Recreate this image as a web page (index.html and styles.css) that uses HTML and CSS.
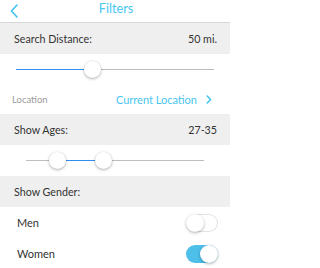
FILE: index.html
```html
<!DOCTYPE html>
<html>
<head>
<meta charset="utf-8">
<link rel="stylesheet" href="styles.css">
</head>
<body>
<div class="screen">
  <header class="topbar">
    <svg class="back" width="8" height="14" viewBox="0 0 8 14"><path d="M7 1 L1.5 7 L7 13" fill="none" stroke="#3fc3ee" stroke-width="1.6" stroke-linecap="round" stroke-linejoin="round"/></svg>
    <div class="title">Filters</div>
  </header>
  <div class="section">
    <span>Search Distance:</span><span>50 mi.</span>
  </div>
  <div class="slider-row">
    <div class="track dist">
      <div class="fill" style="left:0;width:76px"></div>
      <div class="thumb" style="left:76px"></div>
    </div>
  </div>
  <div class="location-row">
    <span class="loc-label">Location</span>
    <span class="loc-value">Current Location <svg class="chev" width="6" height="9" viewBox="0 0 6 9"><path d="M1.2 1 L4.6 4.5 L1.2 8" fill="none" stroke="#3fc3ee" stroke-width="1.5" stroke-linecap="round" stroke-linejoin="round"/></svg></span>
  </div>
  <div class="section">
    <span>Show Ages:</span><span>27-35</span>
  </div>
  <div class="slider-row">
    <div class="track ages">
      <div class="fill" style="left:31px;width:46px"></div>
      <div class="thumb" style="left:31px"></div>
      <div class="thumb" style="left:77px"></div>
    </div>
  </div>
  <div class="section">
    <span>Show Gender:</span>
  </div>
  <div class="toggle-row">
    <span>Men</span>
    <div class="switch"><div class="knob"></div></div>
  </div>
  <div class="toggle-row">
    <span>Women</span>
    <div class="switch on"><div class="knob"></div></div>
  </div>
</div>
</body>
</html>
```
FILE: styles.css
```css
* { box-sizing: border-box; }
html, body { margin: 0; padding: 0; background: #fff; }
body { font-family: Lato, "Open Sans", sans-serif; color: #333; }
.screen { width: 230px; height: 268px; overflow: hidden; }
.topbar {
  height: 23px;
  border-bottom: 1px solid #d8d8d8;
  position: relative;
  display: flex;
  align-items: center;
  justify-content: center;
}
.back { position: absolute; left: 10px; top: 4px; }
.title { color: #47c6f0; font-size: 12.7px; line-height: 23px; margin-top: -5px; margin-left: 2px; }
.section {
  height: 31px;
  background: #efefef;
  display: flex;
  align-items: center;
  justify-content: space-between;
  padding: 0 13px 0 14px;
  font-size: 10.7px;
}
.slider-row {
  height: 31px;
  display: flex;
  align-items: center;
}
.track { position: relative; height: 1px; background: #bdbdbd; }
.track.dist { margin-left: 16px; width: 198px; }
.track.ages { margin-left: 26px; width: 178px; }
.fill { position: absolute; top: 0; height: 1px; background: #2f8ef5; }
.thumb {
  position: absolute;
  top: -8px;
  width: 17px; height: 17px;
  margin-left: -8.5px;
  border-radius: 50%;
  background: #fff;
  box-shadow: 0 1px 3px rgba(0,0,0,0.3), 0 0 0 0.5px rgba(0,0,0,0.06);
}
.location-row {
  height: 29px;
  display: flex;
  align-items: center;
  justify-content: space-between;
  padding: 0 18px 0 12px;
}
.loc-label { font-size: 9.5px; color: #9a9a9a; }
.loc-value { font-size: 11px; color: #47c6f0; display: flex; align-items: center; gap: 9px; }
.toggle-row {
  height: 31px;
  display: flex;
  align-items: center;
  justify-content: space-between;
  padding: 0 12px 0 17px;
  font-size: 11px;
}
.switch {
  width: 32px; height: 18px;
  border-radius: 9px;
  background: #fff;
  box-shadow: inset 0 0 0 1px #e2e2e2;
  position: relative;
}
.switch .knob {
  position: absolute; top: 0; left: 0;
  width: 18px; height: 18px;
  border-radius: 50%;
  background: #fff;
  box-shadow: 0 1px 3px rgba(0,0,0,0.3);
}
.switch.on { background: #4dbfe9; box-shadow: none; }
.switch.on .knob { left: 14px; }
```
